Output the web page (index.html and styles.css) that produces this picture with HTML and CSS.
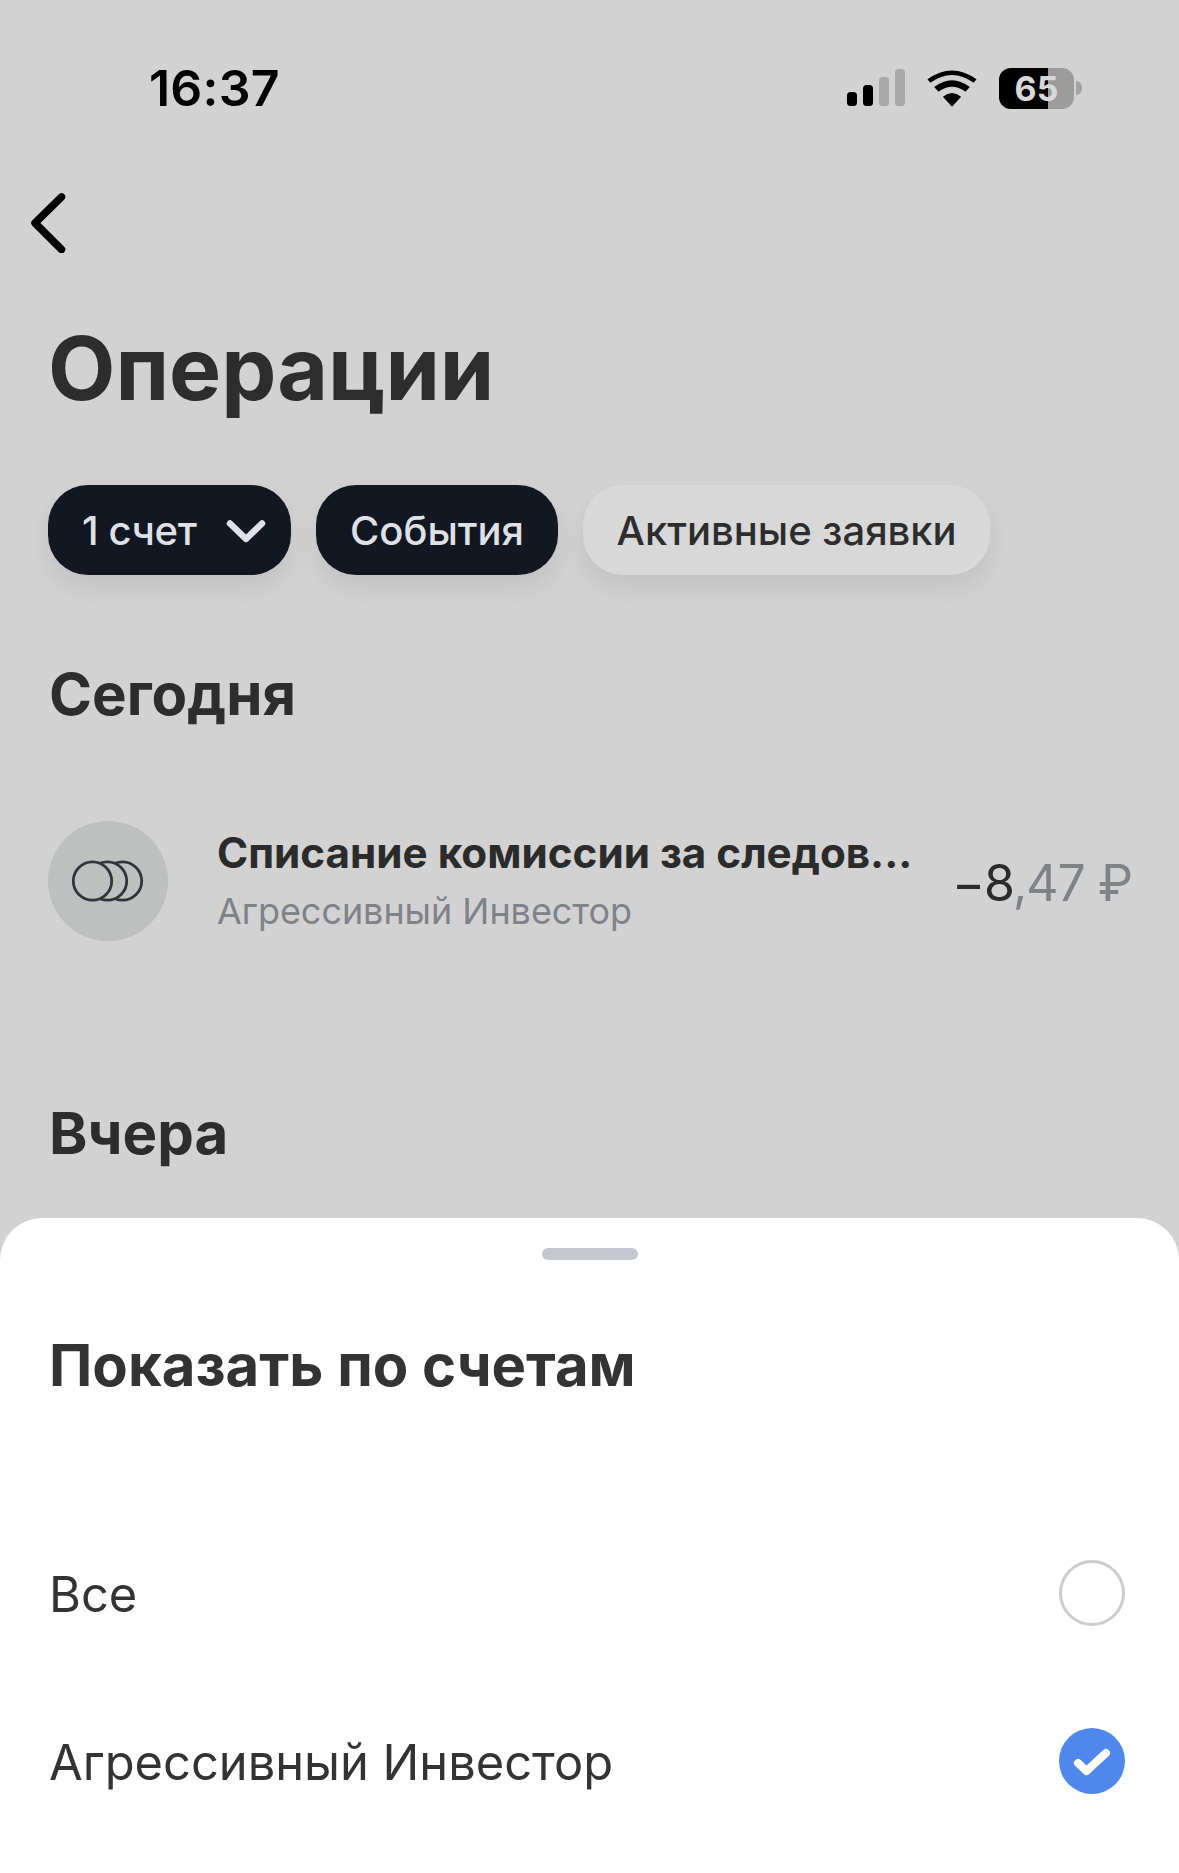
FILE: index.html
```html
<!DOCTYPE html>
<html lang="ru">
<head>
<meta charset="utf-8">
<title>Операции</title>
<link rel="stylesheet" href="styles.css">
</head>
<body>
<div class="screen">
  <div class="backdrop">
    <header class="status">
      <span class="time">16:37</span>
      <div class="status-icons">
        <svg class="signal" width="60" height="38" viewBox="0 0 60 38"><rect x="0" y="23" width="10" height="14" rx="3.5" fill="#000"/><rect x="16" y="16" width="10" height="21" rx="3.5" fill="#000"/><rect x="32" y="8" width="10" height="29" rx="3.5" fill="#a9a9a9"/><rect x="48" y="0" width="10" height="37" rx="3.5" fill="#a9a9a9"/></svg>
        <svg class="wifi" width="50" height="37" viewBox="0 0 52 38"><path d="M26 38 L16.5 27.5 Q26 20 35.500 27.500 Z" fill="#000"/><path d="M12 22.500 L7.500 17.500 Q26 3.500 44.500 17.500 L40 22.500 Q26 12 12 22.500 Z" fill="#000"/><path d="M3.500 13 L0.500 9.500 Q26 -9 51.500 9.500 L48.500 13 Q26 -3 3.500 13 Z" fill="#000"/></svg>
        <div class="battery">
          <div class="battery-body"><span class="battery-level"></span><span class="battery-text">65</span></div>
          <span class="battery-tip"></span>
        </div>
      </div>
    </header>
    <button class="back" aria-label="Назад">
      <svg width="36" height="62" viewBox="0 0 36 62"><path d="M31.500 6 L5 32 L31.500 58.500" fill="none" stroke="#000" stroke-width="7.500" stroke-linecap="round" stroke-linejoin="round"/></svg>
    </button>
    <h1 class="title">Операции</h1>
    <div class="chips">
      <div class="chip chip-dark chip-account"><span class="chip-tight">1 счет</span>
        <svg class="chip-arrow" width="40" height="25" viewBox="0 0 40 25"><path d="M4 4.500 L20 20 L36 4.500" fill="none" stroke="#dfe1e6" stroke-width="6.500" stroke-linecap="round" stroke-linejoin="round"/></svg>
      </div>
      <div class="chip chip-dark chip-events"><span>События</span></div>
      <div class="chip chip-light"><span>Активные заявки</span></div>
    </div>
    <h2 class="day day-today">Сегодня</h2>
    <div class="op">
      <div class="op-avatar">
        <svg width="74" height="44" viewBox="0 0 74 44"><circle cx="51.500" cy="22" r="19.200" fill="#bebfbf" stroke="#31343d" stroke-width="2.800"/><circle cx="36.500" cy="22" r="19.200" fill="#bebfbf" stroke="#31343d" stroke-width="2.800"/><circle cx="21.500" cy="22" r="19.200" fill="#bebfbf" stroke="#31343d" stroke-width="2.800"/></svg>
      </div>
      <div class="op-text">
        <div class="op-name">Списание комиссии за следов...</div>
        <div class="op-sub">Агрессивный Инвестор</div>
      </div>
      <div class="op-sum"><span class="sum-int">−8</span><span class="sum-frac">,47 ₽</span></div>
    </div>
    <h2 class="day day-yesterday">Вчера</h2>
  </div>
  <section class="sheet">
    <div class="handle"></div>
    <h2 class="sheet-title">Показать по счетам</h2>
    <ul class="options">
      <li class="option"><span class="option-label">Все</span><span class="radio"></span></li>
      <li class="option"><span class="option-label">Агрессивный Инвестор</span>
        <svg class="radio-on" width="66" height="66" viewBox="0 0 66 66"><circle cx="33" cy="33" r="33" fill="#4f87ec"/><path d="M19 35 L27.500 43 L47 25" fill="none" stroke="#fff" stroke-width="8" stroke-linecap="round" stroke-linejoin="round"/></svg>
      </li>
    </ul>
  </section>
</div>
</body>
</html>
```
FILE: styles.css
```css
* { box-sizing: border-box; }
html, body { margin: 0; padding: 0; }
body { font-family: Inter, "Liberation Sans", sans-serif; background: #d2d2d2; }
.screen { position: relative; width: 1179px; height: 1873px; overflow: hidden; background: #d2d2d2; }
.backdrop { display: flex; flex-direction: column; padding: 0 48px; }

.status { display: flex; justify-content: space-between; align-items: center; height: 56px; margin-top: 60px; padding-left: 101px; }
.time { font-size: 50px; line-height: 56px; font-weight: 600; color: #000; letter-spacing: .2px; }
.status-icons { display: flex; align-items: center; margin-right: 49px; }
.signal { margin-right: 20px; }
.wifi { margin-right: 22px; }
.battery { display: flex; align-items: center; }
.battery-body { position: relative; width: 75px; height: 41px; border-radius: 12px; overflow: hidden; background: #9c9c9c; display: flex; align-items: center; justify-content: center; }
.battery-level { position: absolute; left: 0; top: 0; bottom: 0; width: 49px; background: #000; }
.battery-text { position: relative; font-size: 34px; font-weight: 700; color: #d8d8d8; }
.battery-tip { width: 6px; height: 14px; margin-left: 2px; background: #a5a5a5; border-radius: 0 7px 7px 0; }

.back { align-self: flex-start; margin: 75px 0 0 -18px; padding: 0; border: 0; background: none; display: block; height: 62px; }
.title { margin: 65px 0 0; font-size: 87.500px; line-height: 100px; font-weight: 700; color: #2d2d2d; }

.chips { display: flex; gap: 25px; margin-top: 67px; }
.chip { display: flex; align-items: center; height: 90px; padding: 0 34px; border-radius: 40px; font-size: 40px; font-weight: 500; box-shadow: 0 12px 24px rgba(0,0,0,.08); }
.chip-dark { background: #121722; color: #dfe1e6; }
.chip-light { background: #d8d8d8; color: #2d2d2d; padding: 0 33.500px; }
.chip-events { padding: 0 34px 0 33.500px; }
.chip-tight { letter-spacing: -.4px; }
.chip-arrow { margin-left: 30px; margin-right: -9px; margin-top: 2px; }

.day { margin: 0; padding-left: 1px; font-size: 58.200px; line-height: 70px; font-weight: 700; color: #2d2d2d; }
.day-today { margin-top: 84px; }
.day-yesterday { margin-top: 157px; }

.op { display: flex; align-items: center; margin-top: 92px; }
.op-avatar { flex: none; width: 120px; height: 120px; border-radius: 50%; background: #bebfbf; display: flex; align-items: center; justify-content: center; }
.op-text { flex: 1; min-width: 0; margin-left: 49px; }
.op-name { font-size: 42.200px; line-height: 50px; font-weight: 700; color: #2b2b2b; white-space: nowrap; }
.op-sub { margin-top: 10px; font-size: 35.900px; line-height: 46px; color: #7f8287; white-space: nowrap; }
.op-sum { flex: none; margin: 3px -1px 0 0; font-size: 50px; font-weight: 400; letter-spacing: -1px; white-space: nowrap; }
.sum-int { color: #2b2b2b; }
.sum-frac { color: #7f8287; }

.sheet { position: absolute; left: 0; right: 0; top: 1218px; bottom: 0; background: #fff; border-radius: 42px 42px 0 0; padding: 30px 54px 0 49px; display: flex; flex-direction: column; }
.handle { align-self: center; width: 96px; height: 12px; border-radius: 6px; background: #c5c8d0; margin-left: 5px; }
.sheet-title { margin: 70px 0 0; font-size: 58px; line-height: 70px; font-weight: 700; color: #333; }
.options { list-style: none; margin: 160px 0 0; padding: 0; display: flex; flex-direction: column; gap: 102px; }
.option { display: flex; justify-content: space-between; align-items: center; height: 66px; font-size: 48.800px; color: #333; }
.option-label { margin-top: 2px; }
.radio { width: 66px; height: 66px; border-radius: 50%; border: 3.500px solid #cdcdcd; }
.radio-on { display: block; }
```
